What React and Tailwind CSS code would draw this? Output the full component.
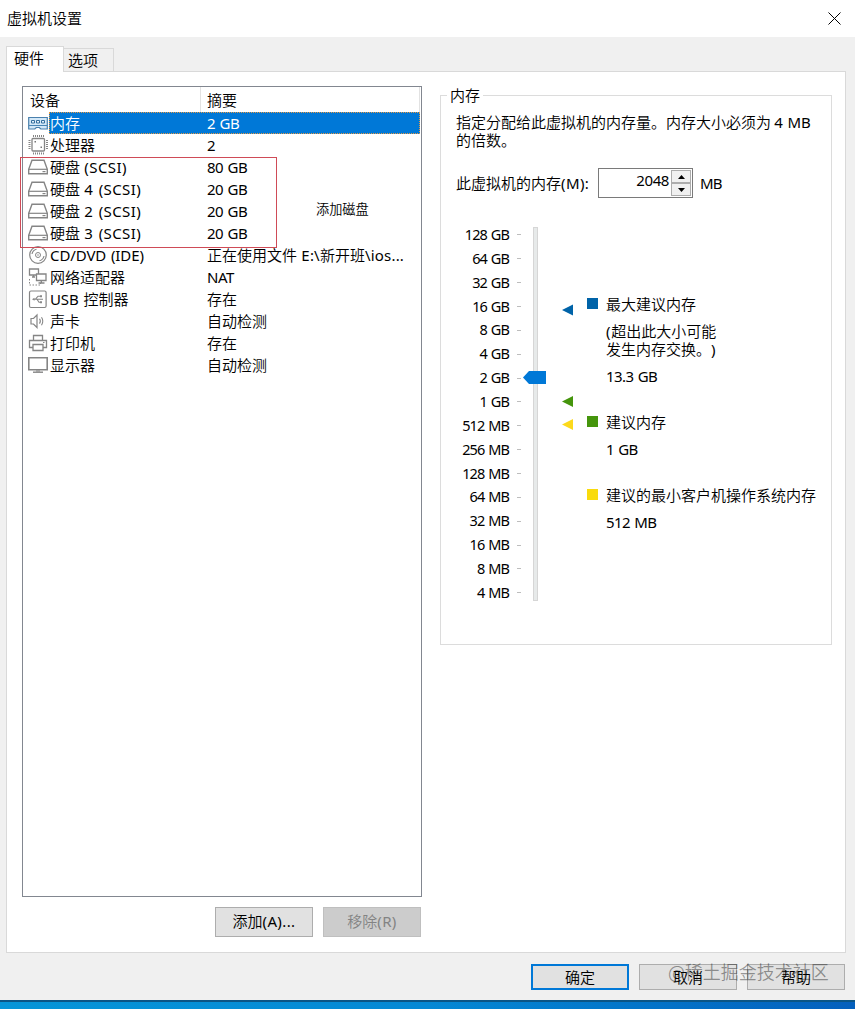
import React, { useState } from "react";

const devices = [
  { icon: "memory", name: "内存", summary: "2 GB" },
  { icon: "cpu", name: "处理器", summary: "2" },
  { icon: "disk", name: "硬盘 (SCSI)", summary: "80 GB" },
  { icon: "disk", name: "硬盘 4 (SCSI)", summary: "20 GB" },
  { icon: "disk", name: "硬盘 2 (SCSI)", summary: "20 GB" },
  { icon: "disk", name: "硬盘 3 (SCSI)", summary: "20 GB" },
  { icon: "cd", name: "CD/DVD (IDE)", summary: "正在使用文件 E:\\新开班\\ios..." },
  { icon: "network", name: "网络适配器", summary: "NAT" },
  { icon: "usb", name: "USB 控制器", summary: "存在" },
  { icon: "sound", name: "声卡", summary: "自动检测" },
  { icon: "printer", name: "打印机", summary: "存在" },
  { icon: "display", name: "显示器", summary: "自动检测" },
];

const sizes = [
  "128 GB", "64 GB", "32 GB", "16 GB", "8 GB", "4 GB", "2 GB", "1 GB",
  "512 MB", "256 MB", "128 MB", "64 MB", "32 MB", "16 MB", "8 MB", "4 MB",
];

const icons = {
  memory: (
    <>
      <path d="M.7 5.5h18.600v11.500h-6.500l-1.500-1.500h-3L6.800 17H.7z" fill="#d3e8f8" stroke="#4a80ad" strokeWidth="1.200" />
      <path d="M3.500 8.500h3v2.500h-3zM8.500 8.500h3v2.500h-3zM13.500 8.500h3v2.500h-3z" fill="#e6f3fc" stroke="#356f9f" />
      <path d="M1 13.500h18" stroke="#4a86b5" />
    </>
  ),
  cpu: (
    <>
      <rect x="4" y="4.500" width="12.500" height="12.500" rx="1" strokeWidth="1.300" />
      <path d="M5.500 1v2M7.500 1v2M9.500 1v2M11.500 1v2M13.500 1v2M15.500 1v2M5.500 18.500v2M7.500 18.500v2M9.500 18.500v2M11.500 18.500v2M13.500 18.500v2M15.500 18.500v2" />
      <path d="M.5 6.500h2M.5 8.500h2M.5 10.500h2M.5 12.500h2M.5 14.500h2M18 6.500h2M18 8.500h2M18 10.500h2M18 12.500h2M18 14.500h2" />
      <path d="M6.500 7H8v1.500H6.500zM12.500 12.500H14V14h-1.500z" fill="#777" stroke="none" />
    </>
  ),
  disk: (
    <>
      <path d="M4 4.200h12l3.300 9.100v4.500H.7v-4.500z" strokeWidth="1.400" />
      <path d="M.7 13.300h18.600" strokeWidth="1.200" />
      <path d="M14.500 15.600h3" strokeWidth="1.200" />
    </>
  ),
  cd: (
    <>
      <circle cx="10" cy="11" r="8.300" strokeWidth="1.200" />
      <circle cx="10" cy="11" r="2.500" />
      <circle cx="10" cy="11" r=".7" fill="#777" stroke="none" />
      <path d="M4 10a6 6 0 0 1 4.500-4.700M16 12a6 6 0 0 1-4.500 4.700" strokeWidth="1.100" />
    </>
  ),
  network: (
    <>
      <path d="M1.500 3h9v6h-9zM4 11h3M5.500 9v2" strokeWidth="1.300" />
      <path d="M8.500 8h9.500v6.500H8.500z" fill="white" strokeWidth="1.300" />
      <path d="M13.300 14.500V17M10.500 17h6" strokeWidth="1.300" />
      <path d="M1.500 13v6h11v-2" strokeDasharray="1.500 1.500" />
    </>
  ),
  usb: (
    <>
      <rect x="1.500" y="3" width="16.600" height="16.500" rx="1.500" strokeWidth="1.200" />
      <path d="M5.500 11.200h9.500M7.500 11.200l2.500-3H12M9 11.200l2 3h1.500" strokeWidth="1.100" />
      <path d="M4 11.200l2.500-1.500v3zM12 7.200h2v2h-2zM12 13.200h2v2h-2z" fill="#888" stroke="none" />
    </>
  ),
  sound: (
    <>
      <path d="M3 8.500h2.500L9 5v12.500L5.500 14H3z" strokeWidth="1.200" />
      <path d="M11.500 8.800q1.700 2.400 0 4.800M13.500 7.200q2.600 4 0 8" strokeWidth="1.100" />
    </>
  ),
  printer: (
    <>
      <path d="M5.500 8V3.500h9V8M5 15.500H1.500v-7h17v7H15" strokeWidth="1.300" />
      <path d="M5 12.500h10v6H5z" fill="white" strokeWidth="1.300" />
      <path d="M15 10.500h1.500" />
    </>
  ),
  display: (
    <>
      <path d="M.8 3.800h18.400v12H.8z" strokeWidth="1.600" />
      <path d="M5 18.200h10" strokeWidth="1.400" />
      <path d="M8 17h4" />
    </>
  ),
};

function DeviceIcon({ name }) {
  return (
    <svg width="21" height="22" viewBox="0 0 21 22" fill="none" stroke="#858585" className="shrink-0">
      {icons[name]}
    </svg>
  );
}

// Latin runs use their own face next to the Chinese
function Text({ children, className = "text-[15px] tracking-[-0.15px]" }) {
  return children.split(/([\x21-\x7e][\x20-\x7e]*)/).map((part, i) =>
    i % 2 ? (
      <span key={i} className={`font-['Noto_Sans',sans-serif] font-normal leading-none [word-spacing:1px] ${className}`}>
        {part}
      </span>
    ) : (
      part
    )
  );
}

function Button({ children, className }) {
  return (
    <button className={`flex w-[98px] items-center justify-center border text-[15px] ${className}`}>
      <span><Text className="text-[15px] tracking-[0.4px]">{children}</Text></span>
    </button>
  );
}

function DeviceList() {
  const [selected, setSelected] = useState(0);

  return (
    <div className="relative h-[811px] w-[400px] border border-[#828790] bg-white">
      <div className="flex h-[25px] items-center leading-[25px]">
        <div className="h-full w-[178px] border-r border-[#e2e2e2] pl-[7px]">设备</div>
        <div className="h-full w-[219px] border-r border-[#e2e2e2] pl-[6px]">摘要</div>
      </div>
      {devices.map((d, i) => (
        <div key={i} onClick={() => setSelected(i)} className="flex h-[22px] pl-[5px]">
          <DeviceIcon name={d.icon} />
          <div
            className={`flex w-[371px] whitespace-pre border border-dotted leading-5 [word-spacing:1px] ${
              i === selected ? "border-[#e59a45] bg-[#0078d7] text-white" : "border-transparent"
            }`}
          >
            <div className="w-[157px]">
              <Text className={d.icon === "disk" ? "text-[15px] tracking-[0.4px]" : "text-[15px] tracking-[-0.1px]"}>{d.name}</Text>
            </div>
            <div>
              <Text className={d.icon === "cd" ? "text-[15px] tracking-[0.2px]" : "text-[15px] tracking-[-0.5px]"}>{d.summary}</Text>
            </div>
          </div>
        </div>
      ))}
      <div className="absolute top-[70px] left-[-3px] h-[91px] w-[257px] border border-[#cf4b57]" />
      <div className="absolute top-[112px] left-[293px] text-[13.2px] leading-5">添加磁盘</div>
    </div>
  );
}

function Slider() {
  return (
    <div className="relative flex h-[382px] w-[120px]">
      <div className="-mt-px flex w-[57px] flex-col pr-px text-right">
        {sizes.map((s) => (
          <div key={s} className="h-[23.87px] whitespace-nowrap leading-[23.87px]">
            <Text className="text-[14.500px] tracking-[-0.9px]">{s}</Text>
          </div>
        ))}
      </div>
      <div className="flex w-[19px] flex-col pl-[7px]">
        {sizes.map((s) => (
          <div key={s} className="flex h-[23.87px] items-center">
            <div className="h-px w-1 bg-[#bdbdbd]" />
          </div>
        ))}
      </div>
      <div className="mt-1 ml-1 h-[374px] w-[5px] border border-[#d6d6d6] bg-[#e7eaea]" />
      <svg width="24" height="13" className="absolute top-[148px] left-[70px]">
        <path d="M0 6.500L6 0h17v13H6z" fill="#0078d7" />
      </svg>
      <svg width="12" height="130" className="absolute top-[81px] left-[109px]">
        <path d="M0 6l11-5.500v11z" fill="#0063a8" />
        <path d="M0 97.500l11-5.500v11z" fill="#45950c" />
        <path d="M0 120.500l11-5.500v11z" fill="#fcd91c" />
      </svg>
    </div>
  );
}

function Legend({ color, title, note, value, className = "" }) {
  return (
    <div className={`flex ${className}`}>
      <div className={`mt-[3px] mr-2 size-[11px] ${color}`} />
      <div className="whitespace-nowrap leading-[18px]">
        <div>{title}</div>
        {note && (
          <div className="mt-[9px] whitespace-pre-line">
            <Text className="text-[15px] tracking-[0.8px]">{note}</Text>
          </div>
        )}
        <div className="mt-[9px]"><Text className="text-[15px] tracking-[-0.6px]">{value}</Text></div>
      </div>
    </div>
  );
}

function MemoryPanel() {
  return (
    <div className="relative mt-[9px] h-[550px] w-[392px] border border-[#dcdcdc] px-[15px] pt-[17px]">
      <div className="absolute top-[-11px] left-[6px] bg-white px-[3px] leading-5">内存</div>
      <div className="w-[365px] leading-[18px]">
        <div className="whitespace-nowrap"><Text>指定分配给此虚拟机的内存量。内存大小必须为 4 MB</Text></div>
        <div>的倍数。</div>
      </div>
      <div className="mt-[19px] flex h-[30px] items-center whitespace-nowrap">
        <div className="w-[142px]"><Text className="text-[15px] tracking-[0.4px]">此虚拟机的内存(M):</Text></div>
        <div className="flex h-[30px] w-[95px] border border-[#7a7a7a] bg-white p-px">
          <div className="flex-1 pr-[2px] text-right leading-5"><Text className="text-[15px] tracking-[-0.4px]">2048</Text></div>
          <div className="flex w-[20px] flex-col">
            <div className="flex h-[13px] items-center justify-center border border-[#acacac] bg-[#f0f0f0]">
              <svg width="7" height="4"><path d="M0 4l3.500-4L7 4z" fill="black" /></svg>
            </div>
            <div className="flex h-[13px] items-center justify-center border border-[#acacac] bg-[#f0f0f0]">
              <svg width="7" height="4"><path d="M0 0l3.500 4L7 0z" fill="black" /></svg>
            </div>
          </div>
        </div>
        <div className="ml-[7px]"><Text className="text-[15px] tracking-[-0.9px]">MB</Text></div>
      </div>
      <div className="mt-[25px] flex">
        <div className="-ml-[3px]"><Slider /></div>
        <div className="ml-[14px] pt-[72px]">
          <Legend color="bg-[#0063a8]" title="最大建议内存" note={"(超出此大小可能\n发生内存交换。)"} value="13.3 GB" />
          <Legend color="bg-[#45950c]" title="建议内存" value="1 GB" className="mt-[28px]" />
          <Legend color="bg-[#f9db0c]" title="建议的最小客户机操作系统内存" value="512 MB" className="mt-[28px]" />
        </div>
      </div>
    </div>
  );
}

export default function App() {
  return (
    <div className="flex h-[1009px] w-[855px] flex-col overflow-hidden bg-[#f0f0f0] font-['Noto_Sans_CJK_SC_DemiLight','Noto_Sans_CJK_SC',sans-serif] text-[15px] font-[350] text-black [text-spacing-trim:space-all]">
      <div className="flex h-[37px] shrink-0 items-center justify-between bg-white pr-[14px] pl-[7px] font-normal">
        <div>虚拟机设置</div>
        <svg width="13" height="13" stroke="black" fill="none"><path d="M.5 .5l12 12M12.500 .5l-12 12" /></svg>
      </div>

      <div className="mt-[9px] ml-[6px] flex h-[25px] shrink-0 items-end">
        <div className="z-10 -mb-px h-[26px] w-[58px] border border-b-0 border-[#d9d9d9] bg-white pl-[7px] leading-[22px]">硬件</div>
        <div className="h-[23px] w-[50px] border border-b-0 border-l-0 border-[#d9d9d9] pl-[4px] leading-[22px]">选项</div>
      </div>

      <div className="ml-[6px] flex h-[882px] w-[840px] shrink-0 border border-[#d9d9d9] bg-white pt-[14px] pl-[15px]">
        <div>
          <DeviceList />
          <div className="mt-[10px] flex justify-end gap-[10px] pr-px">
            <Button className="h-[30px] border-[#adadad] bg-[#e1e1e1] pb-[2px]">添加(A)...</Button>
            <Button className="h-[30px] border-[#bfbfbf] bg-[#cccccc] pb-[2px] text-[#838383]">移除(R)</Button>
          </div>
        </div>
        <div className="ml-[18px]">
          <MemoryPanel />
        </div>
      </div>

      <div className="relative mt-[11px] flex shrink-0 justify-end gap-[10px] pr-[10px]">
        <Button className="h-[26px] border-2 border-[#0078d7] bg-[#e1e1e1]">确定</Button>
        <Button className="h-[26px] border-[#adadad] bg-[#e1e1e1]">取消</Button>
        <Button className="h-[26px] border-[#adadad] bg-[#e1e1e1]">帮助</Button>
        <div className="absolute top-[-5px] left-[668px] whitespace-nowrap text-[18px] leading-6 text-black/40">@稀土掘金技术社区</div>
      </div>

      <div className="mt-auto h-[9px] shrink-0 border-t-2 border-[#0b5585] bg-linear-to-r from-[#0695d8] via-[#0588d4] to-[#0560bd]" />
    </div>
  );
}
